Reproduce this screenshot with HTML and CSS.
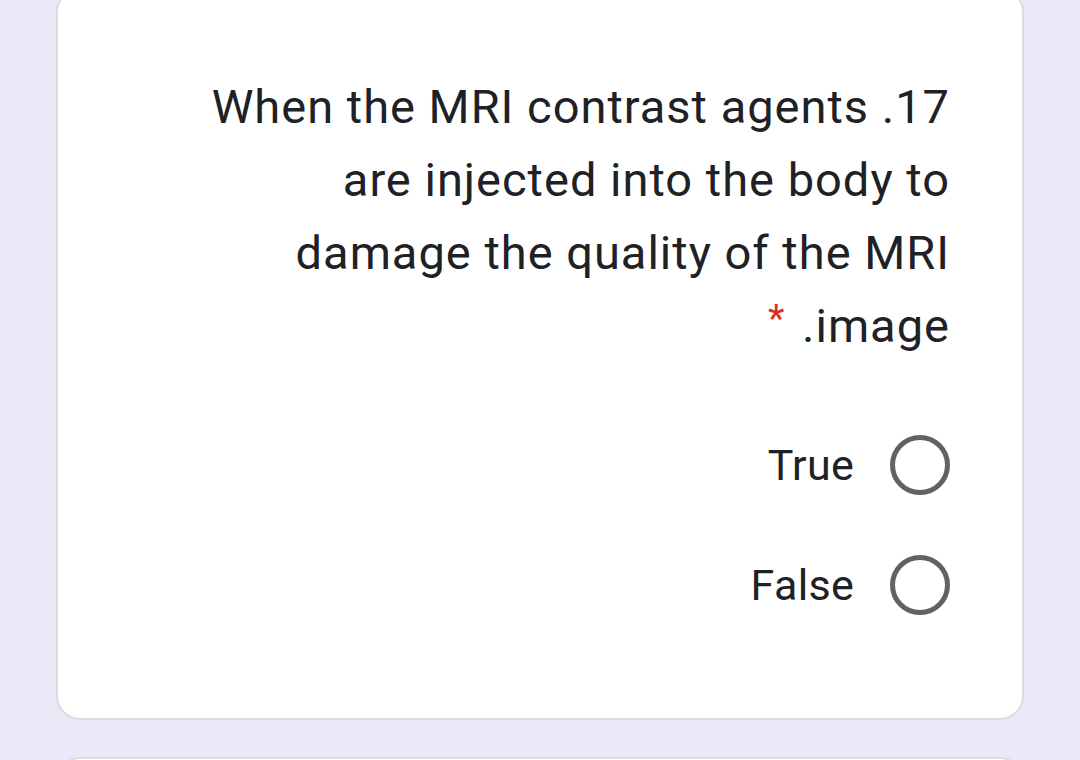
FILE: index.html
```html
<!DOCTYPE html>
<html>
<head>
<meta charset="utf-8">
<link rel="stylesheet" href="styles.css">
</head>
<body>
<div class="page">
  <div class="card">
    <div class="question">
      <span class="line">When the MRI contrast agents .17</span>
      <span class="line">are injected into the body to</span>
      <span class="line">damage the quality of the MRI</span>
      <span class="line"><span class="req">*</span> .image</span>
    </div>
    <div class="options">
      <label class="option"><span class="opt-text">True</span><span class="radio"></span></label>
      <label class="option"><span class="opt-text">False</span><span class="radio"></span></label>
    </div>
  </div>
  <div class="card next"></div>
</div>
</body>
</html>
```
FILE: styles.css
```css
html, body {
  margin: 0;
  padding: 0;
  background: #ece8f7;
  height: 760px;
  overflow: hidden;
}
.page {
  padding: 0 56px;
  display: flex;
  flex-direction: column;
  gap: 37px;
}
.card {
  background: #ffffff;
  border: 2px solid #dcdae0;
  border-radius: 24px;
  box-sizing: border-box;
}
.card:first-child {
  margin-top: -12px;
  height: 732px;
  padding: 80px 72px 0 0;
  display: flex;
  flex-direction: column;
  align-items: flex-end;
}
.card.next {
  height: 120px;
}
.question {
  font-family: Roboto, "Open Sans", sans-serif;
  font-size: 47px;
  letter-spacing: 1px;
  line-height: 73px;
  color: #202124;
  text-align: right;
  display: flex;
  flex-direction: column;
  align-items: flex-end;
}
.req {
  color: #d93025;
  margin-right: 4px;
  font-size: 38px;
  line-height: 0;
  vertical-align: 10px;
}
.options {
  margin-top: 73px;
  display: flex;
  flex-direction: column;
  gap: 59.5px;
}
.option {
  display: flex;
  align-items: center;
  justify-content: flex-end;
  gap: 36px;
  height: 60px;
}
.opt-text {
  font-family: Roboto, sans-serif;
  font-size: 43px;
  letter-spacing: 0.3px;
  color: #202124;
}
.radio {
  width: 60px;
  height: 60px;
  border: 5.5px solid #5f6368;
  border-radius: 50%;
  box-sizing: border-box;
}
```
